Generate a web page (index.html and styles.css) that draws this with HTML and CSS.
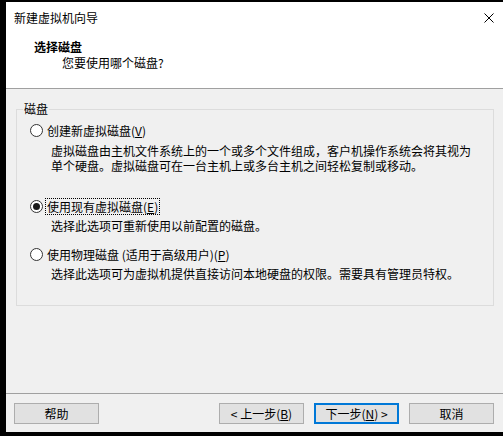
FILE: index.html
```html
<!DOCTYPE html>
<html lang="zh-CN">
<head>
<meta charset="utf-8">
<title>新建虚拟机向导</title>
<link rel="stylesheet" href="styles.css">
</head>
<body>
<div class="window">
  <div class="titlebar">
    <span class="title">新建虚拟机向导</span>
    <svg class="close" width="10" height="10" viewBox="0 0 10 10" aria-hidden="true">
      <path d="M0.5 0.5 L9.5 9.5 M9.5 0.5 L0.5 9.5" stroke="#000" stroke-width="1" fill="none"/>
    </svg>
  </div>
  <div class="header">
    <div class="h-title">选择磁盘</div>
    <div class="h-sub">您要使用哪个磁盘?</div>
  </div>
  <div class="body">
    <fieldset class="group">
      <legend class="legend">磁盘</legend>
      <div class="group-inner">
        <div class="option">
          <span class="radio"></span>
          <span class="opt-label">创建新虚拟磁盘(<u>V</u>)</span>
        </div>
        <div class="desc desc-first">
          <div>虚拟磁盘由主机文件系统上的一个或多个文件组成，客户机操作系统会将其视为</div>
          <div>单个硬盘。虚拟磁盘可在一台主机上或多台主机之间轻松复制或移动。</div>
        </div>

        <div class="option option-second">
          <span class="radio checked"></span>
          <span class="opt-label focus">使用现有虚拟磁盘(<u>E</u>)</span>
        </div>
        <div class="desc">选择此选项可重新使用以前配置的磁盘。</div>

        <div class="option option-third">
          <span class="radio"></span>
          <span class="opt-label">使用物理磁盘 (适用于高级用户)(<u>P</u>)</span>
        </div>
        <div class="desc">选择此选项可为虚拟机提供直接访问本地硬盘的权限。需要具有管理员特权。</div>
      </div>
    </fieldset>
  </div>
  <div class="footer">
    <button class="btn">帮助</button>
    <div class="spacer"></div>
    <button class="btn">&lt; 上一步(<u>B</u>)</button>
    <button class="btn btn-default">下一步(<u>N</u>) &gt;</button>
    <button class="btn">取消</button>
  </div>
</div>
</body>
</html>
```

FILE: styles.css
```css
* { box-sizing: border-box; }

html, body {
  margin: 0;
  padding: 0;
  background: #000;
}

body {
  width: 503px;
  height: 436px;
  overflow: hidden;
  font-family: "Noto Sans CJK SC", "Microsoft YaHei", sans-serif;
  font-size: 12px;
  color: #000;
}

.window {
  margin: 2px 0 0 6px;
  width: 497px;
  height: 430px;
  background: #f0f0f0;
  display: flex;
  flex-direction: column;
}

.titlebar {
  height: 31px;
  background: #fff;
  display: flex;
  align-items: center;
  padding: 0 9px 0 8px;
}

.title {
  flex: 1;
  line-height: 16px;
}

.close {
  display: block;
}

.header {
  height: 56px;
  background: #fff;
  border-bottom: 1px solid #a0a0a0;
  padding-top: 6px;
}

.h-title {
  font-weight: bold;
  line-height: 16px;
  padding-left: 28px;
}

.h-sub {
  line-height: 16px;
  padding-left: 56px;
}

.body {
  height: 304px;
  padding-top: 13px;
}

.group {
  margin: 0 9px 0 10px;
  padding: 0;
  border: 1px solid #dcdcdc;
  min-width: 0;
}

.legend {
  margin-left: 6px;
  padding: 0 1px;
  line-height: 14px;
}

.group-inner {
  padding: 6px 0 24px 13px;
}

.option {
  display: flex;
  align-items: center;
  height: 16px;
}

.option-second { margin-top: 25px; }
.option-third { margin-top: 13px; }

.radio {
  width: 13px;
  height: 13px;
  border: 1px solid #333;
  border-radius: 50%;
  background: #fff;
  margin-right: 3px;
  display: flex;
  align-items: center;
  justify-content: center;
  flex: none;
}

.radio.checked::after {
  content: "";
  width: 7px;
  height: 7px;
  border-radius: 50%;
  background: #1a1a1a;
}

.opt-label {
  line-height: 15px;
  padding: 0 1px;
}

.opt-label.focus {
  outline: 1px dotted #000;
  outline-offset: 0;
}

.desc {
  padding-left: 21px;
  line-height: 14px;
  margin-top: 5px;
}

.desc-first {
  line-height: 15px;
  margin-top: 5px;
}

.footer {
  flex: 1;
  border-top: 1px solid #a0a0a0;
  display: flex;
  align-items: flex-start;
  padding: 9px 9px 0 8px;
  gap: 10px;
}

.spacer { flex: 1; }

.btn {
  width: 85px;
  height: 21px;
  padding: 0;
  margin: 0;
  background: #e1e1e1;
  border: 1px solid #adadad;
  font-family: inherit;
  font-size: 12px;
  line-height: 17px;
  color: #000;
}

.btn-default {
  border: 2px solid #0078d7;
}
```
